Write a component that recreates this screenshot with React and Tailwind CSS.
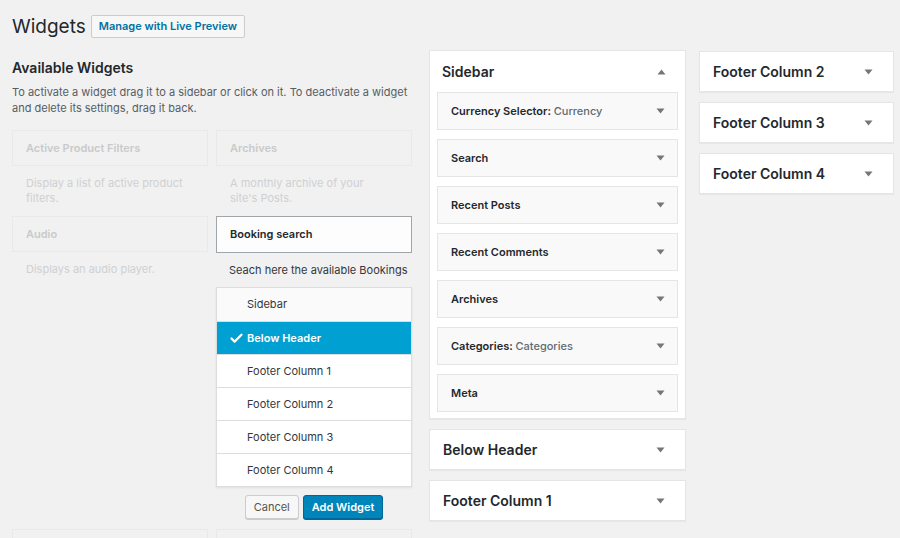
import React from 'react';
import { Check } from 'lucide-react';

const font = { fontFamily: 'Inter, "Liberation Sans", sans-serif' };

const Caret = ({ up = false }) => (
  <svg width="9" height="6" viewBox="0 0 9 6" className="shrink-0">
    {up ? <path d="M4.5 0.5 L8.5 5.5 L0.5 5.5 Z" fill="#72777c" /> : <path d="M0.5 0.5 L8.5 0.5 L4.5 5.5 Z" fill="#72777c" />}
  </svg>
);

const FadedWidget = ({ title, desc }) => (
  <div>
    <div className="flex h-[36px] items-center border border-[#e9e9e9] px-[13px] text-[11px] font-semibold text-[#c9cacb]">
      {title}
    </div>
    <p className="h-[50px] pt-[10px] pr-6 pl-[14px] text-[11px] leading-[15px] text-[#cfd0d1]">{desc}</p>
  </div>
);

const sidebars = ['Sidebar', 'Below Header', 'Footer Column 1', 'Footer Column 2', 'Footer Column 3', 'Footer Column 4'];

const BookingSearch = () => (
  <div>
    <div className="flex h-[37px] items-center border border-[#a0a5aa] bg-[#fdfdfd] px-[13px] text-[11px] font-semibold text-[#23282d]">
      Booking search
    </div>
    <p className="pt-[10px] pl-[13px] text-[11px] leading-[15px] text-[#32373c]">Seach here the available Bookings</p>
    <ul className="mt-[9px] border border-[#dddddd] bg-white shadow-[0_1px_2px_rgba(0,0,0,0.08)]">
      {sidebars.map((name, i) => {
        const selected = name === 'Below Header';
        return (
          <li
            key={name}
            className={`flex h-[33px] items-center text-[11px] ${i > 0 ? 'border-t border-[#dddddd]' : ''} ${
              selected ? 'bg-[#00a0d2] font-semibold text-white' : i === 0 ? 'bg-[#fafafa] text-[#32373c]' : 'text-[#32373c]'
            }`}
          >
            <span className="flex w-[30px] justify-end pr-[3px]">
              {selected && <Check size={15} strokeWidth={3.5} color="#ffffff" />}
            </span>
            <span>{name}</span>
          </li>
        );
      })}
    </ul>
    <div className="mt-[8px] flex justify-center gap-[4px]">
      <button className="h-[24px] rounded-[3px] border border-[#cccccc] bg-[#f7f7f7] px-[8px] text-[11px] text-[#555555] shadow-[0_1px_0_#cccccc]">
        Cancel
      </button>
      <button className="h-[24px] rounded-[3px] border border-[#006799] bg-[#0085ba] px-[8px] text-[11px] font-semibold text-white shadow-[0_1px_0_#006799]">
        Add Widget
      </button>
    </div>
  </div>
);

const innerWidgets = [
  { title: 'Currency Selector', extra: 'Currency' },
  { title: 'Search' },
  { title: 'Recent Posts' },
  { title: 'Recent Comments' },
  { title: 'Archives' },
  { title: 'Categories', extra: 'Categories' },
  { title: 'Meta' },
];

const AreaBox = ({ title }) => (
  <div className="flex h-[41px] items-center justify-between border border-[#e5e5e5] bg-white pr-[20px] pl-[13px] shadow-[0_1px_1px_rgba(0,0,0,0.04)]">
    <span className="text-[14px] font-semibold text-[#23282d]">{title}</span>
    <Caret />
  </div>
);

export default function App() {
  return (
    <div className="h-screen overflow-hidden bg-[#f1f1f1] px-3" style={font}>
      <div className="mt-[14px] flex h-[24px] items-center gap-[5px]">
        <h1 className="text-[19px] leading-none font-normal text-[#23282d]">Widgets</h1>
        <button className="h-[23px] rounded-[2px] border border-[#cccccc] bg-[#f7f7f7] px-[7px] text-[11px] font-semibold text-[#0071a1]">
          Manage with Live Preview
        </button>
      </div>

      <div className="mt-[12px] flex items-start">
        {/* Available widgets */}
        <div className="w-[400px] shrink-0">
          <h2 className="mt-[8px] text-[14px] leading-5 font-semibold text-[#23282d]">Available Widgets</h2>
          <p className="mt-[6px] text-[11px] leading-[16px] text-[#555d66]">
            To activate a widget drag it to a sidebar or click on it. To deactivate a widget and delete its settings, drag it back.
          </p>
          <div className="mt-[14px] grid grid-cols-2 gap-x-[8px]">
            <FadedWidget title="Active Product Filters" desc="Display a list of active product filters." />
            <FadedWidget title="Archives" desc="A monthly archive of your site's Posts." />
            <FadedWidget title="Audio" desc="Displays an audio player." />
            <BookingSearch />
            <div className="mt-[10px] h-[36px] border border-[#e9e9e9]" />
            <div className="mt-[10px] h-[36px] border border-[#e9e9e9]" />
          </div>
        </div>

        {/* Sidebar column */}
        <div className="ml-[17px] flex w-[257px] shrink-0 flex-col gap-[10px]">
          <div className="border border-[#e5e5e5] bg-white shadow-[0_1px_1px_rgba(0,0,0,0.04)]">
            <div className="flex h-[41px] items-center justify-between pr-[19px] pl-[12px]">
              <span className="text-[14px] font-semibold text-[#23282d]">Sidebar</span>
              <Caret up />
            </div>
            <div className="flex flex-col gap-[9px] px-[7px] pb-[6px]">
              {innerWidgets.map((w) => (
                <div
                  key={w.title}
                  className="flex h-[38px] items-center justify-between border border-[#e5e5e5] bg-[#f9f9f9] pr-[12px] pl-[13px] text-[11px] font-semibold text-[#23282d]"
                >
                  <span>
                    {w.title}
                    {w.extra && (
                      <>
                        : <span className="font-medium text-[#606a73]">{w.extra}</span>
                      </>
                    )}
                  </span>
                  <Caret />
                </div>
              ))}
            </div>
          </div>
          <AreaBox title="Below Header" />
          <AreaBox title="Footer Column 1" />
        </div>

        {/* Right column */}
        <div className="mt-[1px] ml-[13px] flex w-[195px] shrink-0 flex-col gap-[10px]">
          <AreaBox title="Footer Column 2" />
          <AreaBox title="Footer Column 3" />
          <AreaBox title="Footer Column 4" />
        </div>
      </div>
    </div>
  );
}
